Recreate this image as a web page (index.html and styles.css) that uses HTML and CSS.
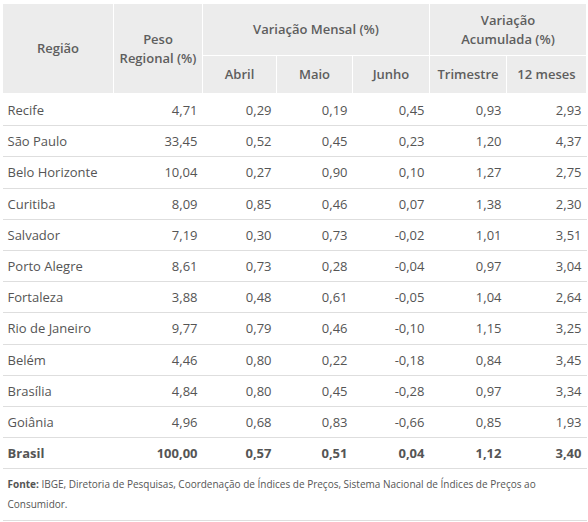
FILE: index.html
```html
<!DOCTYPE html>
<html>

<head>
    <link rel="stylesheet" href="styles.css">
</head>

<body>
    <table class="ipca">
        <colgroup>
            <col class="c-reg">
            <col class="c-peso">
            <col class="c-abr">
            <col class="c-mai">
            <col class="c-jun">
            <col class="c-tri">
            <col class="c-12m">
        </colgroup>
        <thead>
            <tr class="h1">
                <th rowspan="2">Região</th>
                <th rowspan="2">Peso<br>Regional (%)</th>
                <th colspan="3">Variação Mensal (%)</th>
                <th colspan="2">Variação<br>Acumulada (%)</th>
            </tr>
            <tr class="h2">
                <th>Abril</th>
                <th>Maio</th>
                <th>Junho</th>
                <th>Trimestre</th>
                <th>12 meses</th>
            </tr>
        </thead>
        <tbody>
            <tr><td>Recife</td><td>4,71</td><td>0,29</td><td>0,19</td><td>0,45</td><td>0,93</td><td>2,93</td></tr>
            <tr><td>São Paulo</td><td>33,45</td><td>0,52</td><td>0,45</td><td>0,23</td><td>1,20</td><td>4,37</td></tr>
            <tr><td>Belo Horizonte</td><td>10,04</td><td>0,27</td><td>0,90</td><td>0,10</td><td>1,27</td><td>2,75</td></tr>
            <tr><td>Curitiba</td><td>8,09</td><td>0,85</td><td>0,46</td><td>0,07</td><td>1,38</td><td>2,30</td></tr>
            <tr><td>Salvador</td><td>7,19</td><td>0,30</td><td>0,73</td><td>-0,02</td><td>1,01</td><td>3,51</td></tr>
            <tr><td>Porto Alegre</td><td>8,61</td><td>0,73</td><td>0,28</td><td>-0,04</td><td>0,97</td><td>3,04</td></tr>
            <tr><td>Fortaleza</td><td>3,88</td><td>0,48</td><td>0,61</td><td>-0,05</td><td>1,04</td><td>2,64</td></tr>
            <tr><td>Rio de Janeiro</td><td>9,77</td><td>0,79</td><td>0,46</td><td>-0,10</td><td>1,15</td><td>3,25</td></tr>
            <tr><td>Belém</td><td>4,46</td><td>0,80</td><td>0,22</td><td>-0,18</td><td>0,84</td><td>3,45</td></tr>
            <tr><td>Brasília</td><td>4,84</td><td>0,80</td><td>0,45</td><td>-0,28</td><td>0,97</td><td>3,34</td></tr>
            <tr><td>Goiânia</td><td>4,96</td><td>0,68</td><td>0,83</td><td>-0,66</td><td>0,85</td><td>1,93</td></tr>
            <tr class="total"><td>Brasil</td><td>100,00</td><td>0,57</td><td>0,51</td><td>0,04</td><td>1,12</td><td>3,40</td></tr>
        </tbody>
        <tfoot>
            <tr>
                <td colspan="7"><strong>Fonte:</strong> IBGE, Diretoria de Pesquisas, Coordenação de Índices de Preços, Sistema Nacional de Índices de Preços ao Consumidor.</td>
            </tr>
        </tfoot>
    </table>
</body>

</html>
```

FILE: styles.css
```css
body {
    margin: 0;
    padding: 3px 3px 0 2px;
    background-color: #fff;
    font-family: "Open Sans", "Liberation Sans", sans-serif;
    font-size: 13px;
    color: #555;
}

.ipca {
    width: 584px;
    border-collapse: collapse;
    table-layout: fixed;
}

.c-reg { width: 111px; }
.c-peso { width: 89px; }
.c-abr { width: 74px; }
.c-mai { width: 76px; }
.c-jun { width: 77px; }
.c-tri { width: 77px; }
.c-12m { width: 80px; }

.ipca th {
    background-color: #ececec;
    border: 1px solid #fff;
    color: #5e5e5e;
    font-weight: 600;
    line-height: 19px;
    text-align: center;
    padding: 0 3px;
}

.ipca .h1 th {
    height: 51px;
}

.ipca .h2 th {
    height: 37px;
}

.ipca td {
    height: 30.2px;
    padding: 0 5px;
    line-height: 18px;
    border-bottom: 1px solid #dedede;
    text-align: right;
    white-space: nowrap;
}

.ipca td:first-child {
    text-align: left;
}

.ipca tbody tr:first-child td {
    height: 31.2px;
}

.ipca .total td {
    font-weight: 700;
}

.ipca tfoot td {
    text-align: left;
    white-space: normal;
    height: auto;
    font-size: 10px;
    line-height: 20px;
    padding: 5px 5px 6px;
}

.ipca tfoot strong {
    font-weight: 700;
}
```
